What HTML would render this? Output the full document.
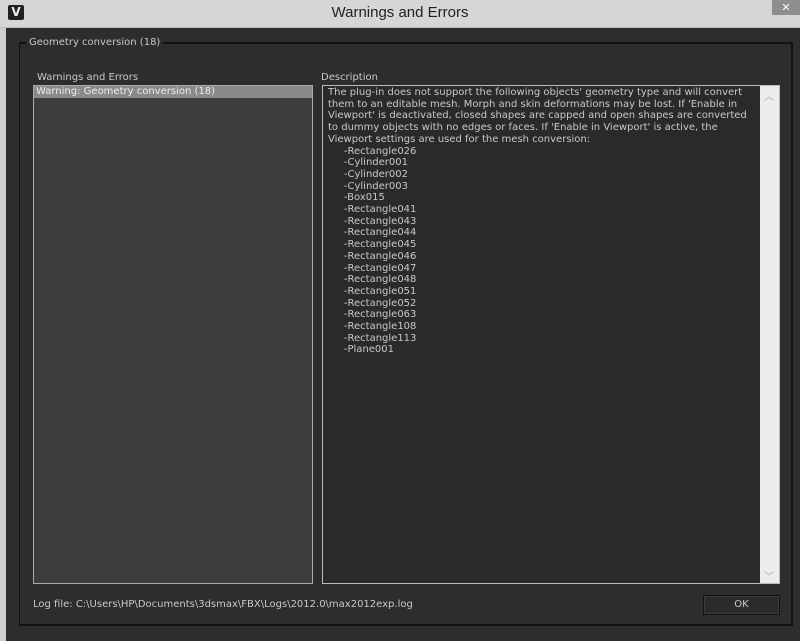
<!DOCTYPE html>
<html><head><meta charset="utf-8"><style>
*{margin:0;padding:0;box-sizing:border-box}
body{width:800px;height:641px;overflow:hidden;background:#2d2d2d;font-family:"DejaVu Sans","Liberation Sans",sans-serif;position:relative}
.a{position:absolute}
.t{font-size:10px;color:#c8c8c8;white-space:pre;line-height:11.7px}
</style></head><body>
<div class="a" style="left:0;top:0;width:800px;height:28px;background:#d6d6d6;border-bottom:1px solid #bdbdbd"></div>
<div class="a" style="left:0;top:28px;width:6px;height:613px;background:#cfcfcf"></div>
<div class="a" style="left:8px;top:5px;width:16px;height:15px;background:#222;border-radius:2px;color:#eee;font-size:12px;font-weight:bold;text-align:center;line-height:15px">V</div>
<div class="a" style="left:0;top:4px;width:800px;text-align:center;font-family:'Liberation Sans',sans-serif;font-size:15px;color:#222">Warnings and Errors</div>
<div class="a" style="left:772px;top:0;width:28px;height:15px;background:#8e8e8e;color:#fff;font-size:11px;text-align:center;line-height:15px">✕</div>
<div class="a" style="left:19px;top:42px;width:774px;height:584px;border:2px solid #111;border-left-width:1px"></div>
<div class="a t" style="left:26px;top:37px;background:#2d2d2d;padding:0 3px">Geometry conversion (18)</div>
<div class="a t" style="left:37px;top:72px">Warnings and Errors</div>
<div class="a t" style="left:321px;top:72px">Description</div>
<div class="a" style="left:33px;top:85px;width:280px;height:499px;background:#3d3d3d;border:1px solid #aaa"></div>
<div class="a t" style="left:34px;top:86px;width:278px;height:12px;background:#8a8a8a;color:#eee;padding-left:2px;line-height:12px">Warning: Geometry conversion (18)</div>
<div class="a" style="left:322px;top:85px;width:458px;height:499px;background:#2a2a2a;border:1px solid #bbb"></div>
<div class="a" style="left:760px;top:86px;width:19px;height:497px;background:#ececec"></div>
<div class="a" style="left:764px;top:88px;color:#aaa;font-size:10px">︿</div>
<div class="a" style="left:764px;top:568px;color:#aaa;font-size:10px">﹀</div>
<div class="a t" style="left:328px;top:87px">The plug-in does not support the following objects' geometry type and will convert
them to an editable mesh. Morph and skin deformations may be lost. If 'Enable in
Viewport' is deactivated, closed shapes are capped and open shapes are converted
to dummy objects with no edges or faces. If 'Enable in Viewport' is active, the
Viewport settings are used for the mesh conversion:
     -Rectangle026
     -Cylinder001
     -Cylinder002
     -Cylinder003
     -Box015
     -Rectangle041
     -Rectangle043
     -Rectangle044
     -Rectangle045
     -Rectangle046
     -Rectangle047
     -Rectangle048
     -Rectangle051
     -Rectangle052
     -Rectangle063
     -Rectangle108
     -Rectangle113
     -Plane001</div>
<div class="a t" style="left:33px;top:599px">Log file: C:\Users\HP\Documents\3dsmax\FBX\Logs\2012.0\max2012exp.log</div>
<div class="a" style="left:703px;top:595px;width:77px;height:20px;background:#2b2b2b;border:1px solid #111;box-shadow:inset 0 0 0 1px #3a3a3a;color:#ccc;font-size:10px;text-align:center;line-height:18px">OK</div>
</body></html>
